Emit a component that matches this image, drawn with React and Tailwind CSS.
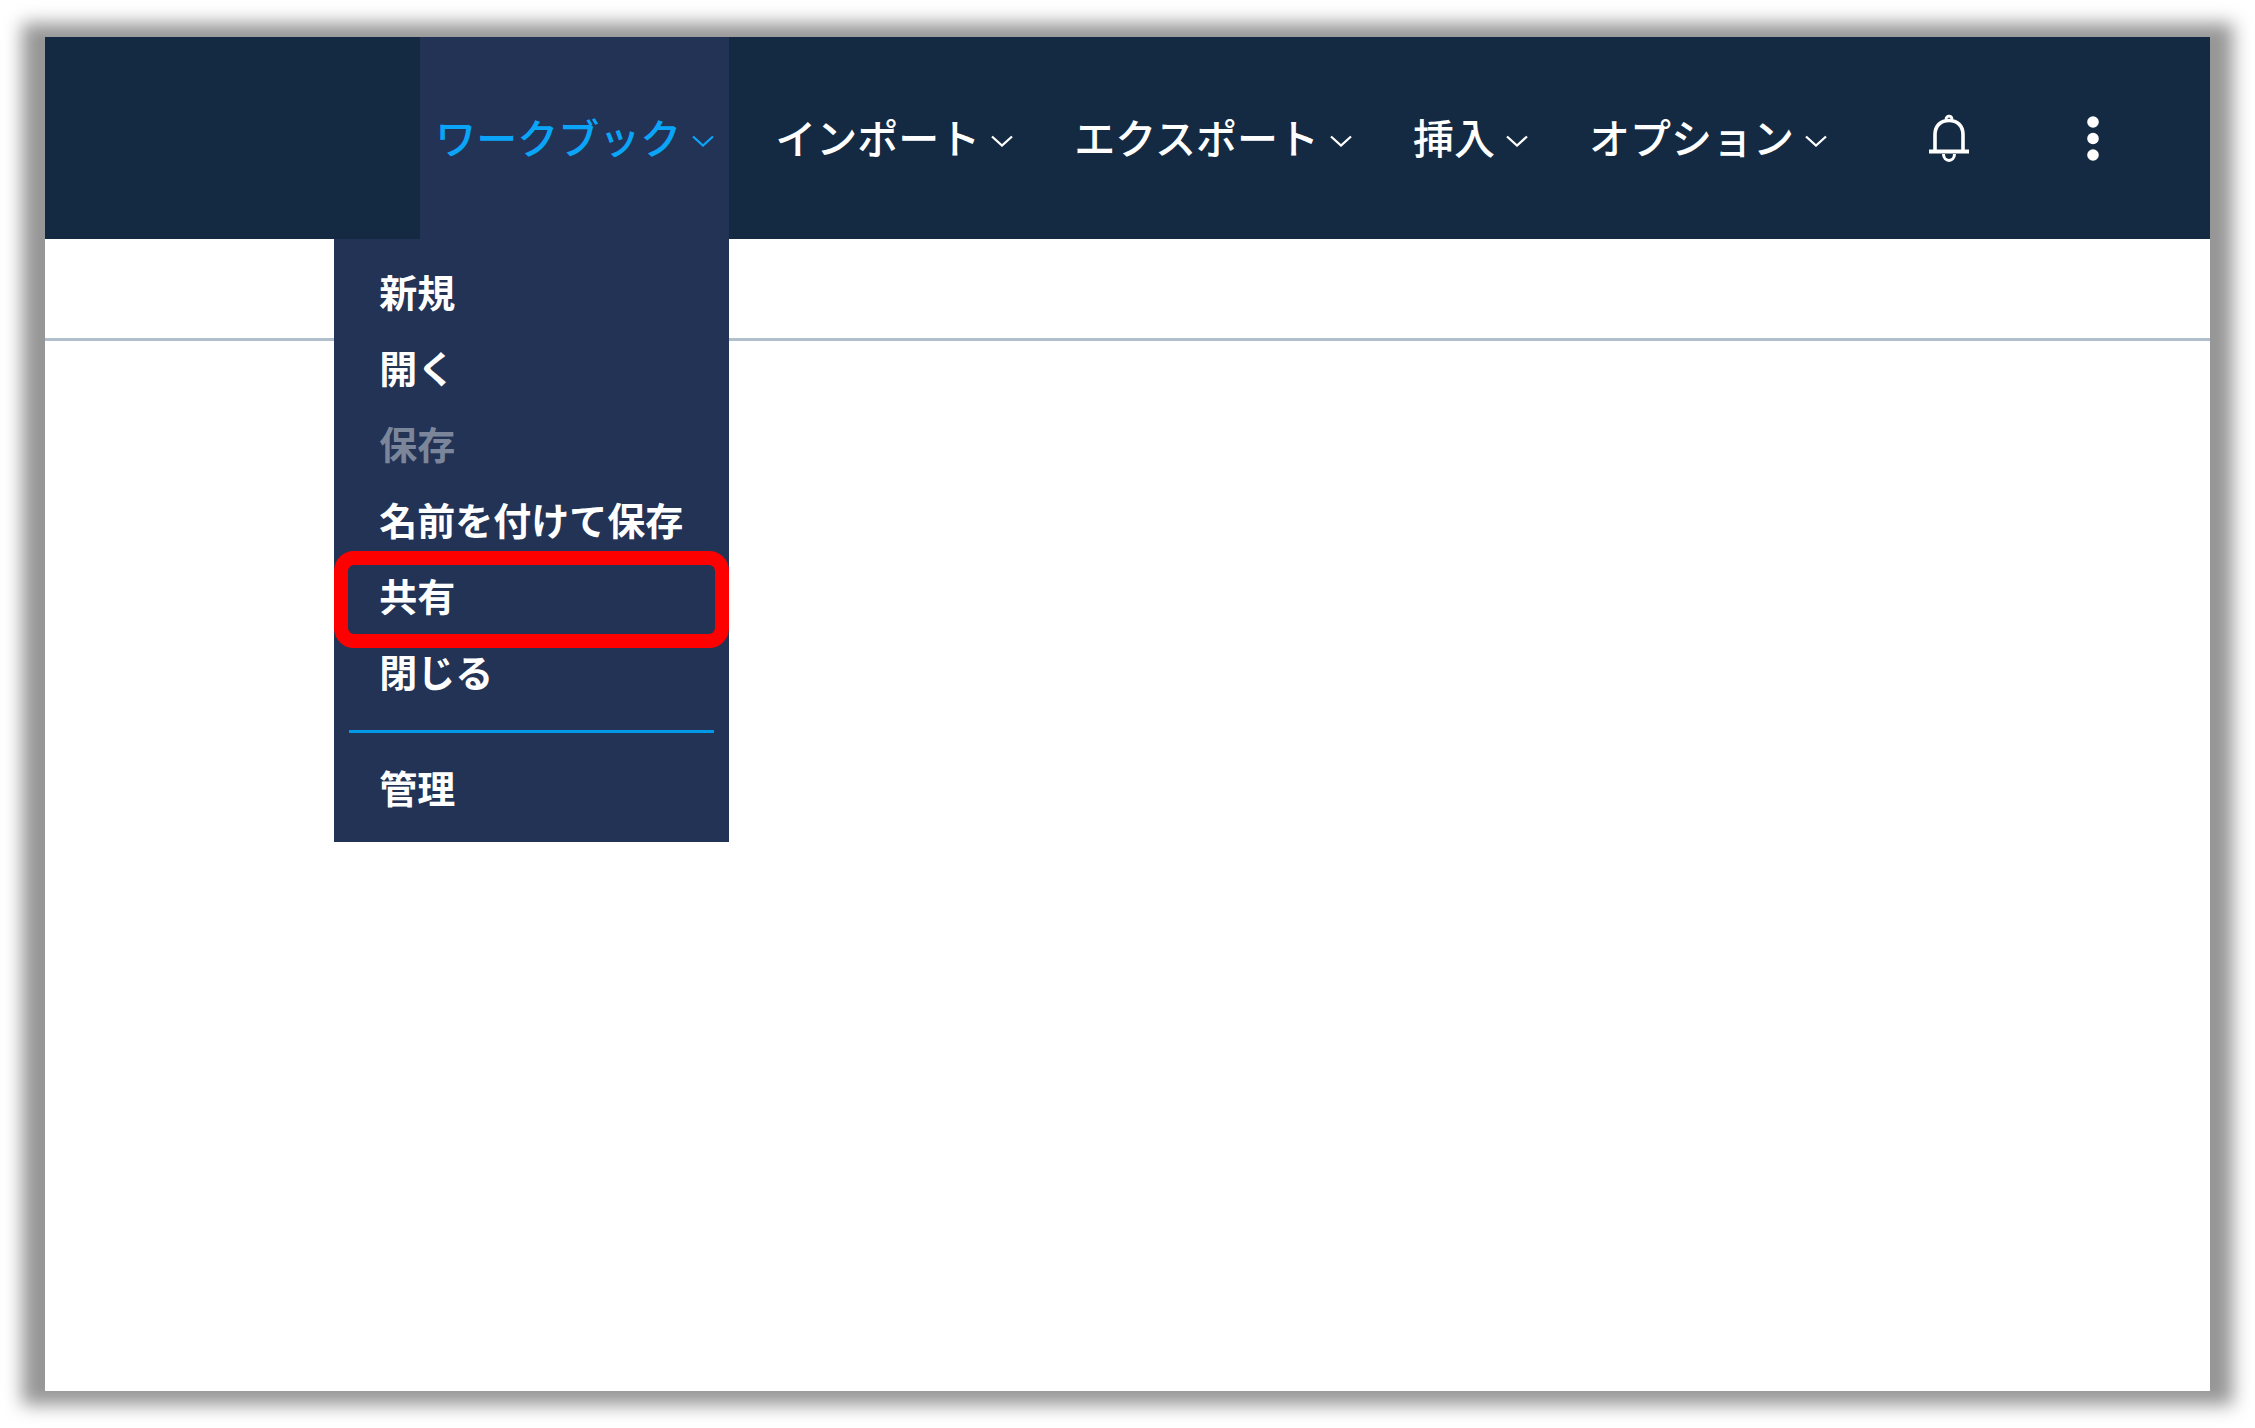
import React from "react";

const MENUS = ["インポート", "エクスポート", "挿入", "オプション"];

const WORKBOOK_ITEMS = [
  { label: "新規" },
  { label: "開く" },
  { label: "保存", disabled: true },
  { label: "名前を付けて保存" },
  { label: "共有", highlighted: true },
  { label: "閉じる" },
];

function Chevron() {
  return (
    <svg
      className="mt-[10px] h-3 w-[22px] shrink-0"
      viewBox="0 0 22 12"
      fill="none"
      stroke="currentColor"
      strokeWidth="2.3"
      aria-hidden="true"
    >
      <path d="M1 1.500 11 10.500 21 1.500" />
    </svg>
  );
}

function Bell() {
  return (
    <svg
      className="h-12 w-10"
      viewBox="0 0 40 48"
      fill="none"
      stroke="currentColor"
      aria-hidden="true"
    >
      <path
        d="M6 37V20.5C6 11.5 12 6.5 20 6.5S34 11.5 34 20.5V37"
        strokeWidth="3.6"
      />
      <path d="M17 5.5C17 1 23 1 23 5.5" strokeWidth="2.8" />
      <path d="M0 37.5H40" strokeWidth="4" />
      <path d="M14.5 40C14.5 48.5 25.5 48.5 25.5 40" strokeWidth="3" />
    </svg>
  );
}

function Dots() {
  return (
    <svg className="h-12 w-3" viewBox="0 0 12 48" fill="currentColor" aria-hidden="true">
      <circle cx="6" cy="8" r="5.8" />
      <circle cx="6" cy="24.5" r="5.8" />
      <circle cx="6" cy="41" r="5.8" />
    </svg>
  );
}

function MenuItem({ label, disabled, highlighted }) {
  return (
    <li className="relative">
      <button
        type="button"
        role="menuitem"
        disabled={disabled}
        className="flex h-[76px] w-full items-center px-[45px] text-[38px] leading-none font-bold whitespace-nowrap text-white disabled:text-[#7b869b]"
      >
        {label}
      </button>
      {highlighted && (
        <span className="pointer-events-none absolute inset-x-0 -top-[6px] -bottom-[15px] rounded-[20px] border-[14px] border-[#ff0000]" />
      )}
    </li>
  );
}

function MenuButton({ label, active }) {
  return (
    <button
      type="button"
      aria-haspopup="menu"
      aria-expanded={Boolean(active)}
      className={
        active
          ? "flex h-full items-center gap-[11px] bg-[#223355] px-[15px] pb-1 text-[#0aa5f8]"
          : "flex h-full items-center gap-[11px] px-[15px] pb-1 text-white"
      }
    >
      <span className="text-[41px] leading-none font-medium whitespace-nowrap">{label}</span>
      <Chevron />
    </button>
  );
}

export default function App() {
  return (
    <div className="flex min-h-screen flex-col overflow-hidden bg-white px-[45px] py-[37px] font-['Noto_Sans_CJK_JP',sans-serif]">
      <div className="relative isolate flex flex-1 flex-col">
        <div className="absolute -inset-x-[23px] -inset-y-[14px] -z-10 bg-[#969696] blur-[9px]" />
        <header className="relative z-10 flex h-[202px] items-stretch justify-end bg-[#142a42] pr-[111px] text-white">
          <nav className="flex items-stretch gap-[31px]" aria-label="メニュー">
            <div className="relative">
              <MenuButton label="ワークブック" active />
              <ul
                role="menu"
                className="absolute top-full right-0 w-[395px] bg-[#223355] pt-[14px] pb-[17px]"
              >
                {WORKBOOK_ITEMS.map((item) => (
                  <MenuItem key={item.label} {...item} />
                ))}
                <li role="separator" className="mx-[15px] mt-[21px] mb-4 h-[3px] bg-[#0099e8]" />
                <MenuItem label="管理" />
              </ul>
            </div>
            {MENUS.map((label) => (
              <MenuButton key={label} label={label} />
            ))}
          </nav>
          <button type="button" aria-label="通知" className="ml-[87px] flex items-center">
            <Bell />
          </button>
          <button type="button" aria-label="その他" className="ml-[118px] flex items-center">
            <Dots />
          </button>
        </header>
        <main className="flex flex-1 flex-col bg-white">
          <div className="h-[102px] border-b-3 border-[#b1bfcc]" />
        </main>
      </div>
    </div>
  );
}
